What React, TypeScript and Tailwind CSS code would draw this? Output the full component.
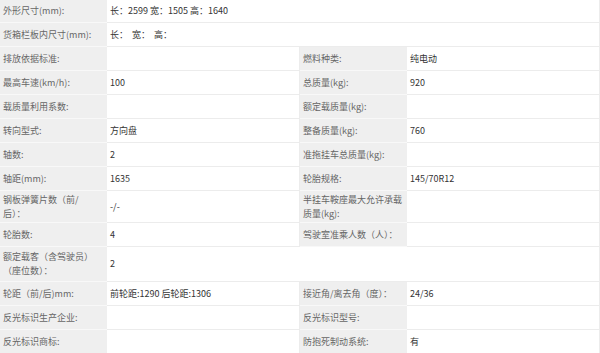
type Cell = { label: string; value: string };
type Row = { h: string; cells: Cell[]; wide?: boolean };

const rows: Row[] = [
  { h: 'h-[23px]', wide: true, cells: [{ label: '外形尺寸(mm):', value: '长：2599 宽：1505 高：1640' }] },
  { h: 'h-[24px]', wide: true, cells: [{ label: '货箱栏板内尺寸(mm):', value: '长：  宽：  高：' }] },
  {
    h: 'h-[24px]',
    cells: [
      { label: '排放依据标准:', value: '' },
      { label: '燃料种类:', value: '纯电动' },
    ],
  },
  {
    h: 'h-[24px]',
    cells: [
      { label: '最高车速(km/h):', value: '100' },
      { label: '总质量(kg):', value: '920' },
    ],
  },
  {
    h: 'h-[24px]',
    cells: [
      { label: '载质量利用系数:', value: '' },
      { label: '额定载质量(kg):', value: '' },
    ],
  },
  {
    h: 'h-[24px]',
    cells: [
      { label: '转向型式:', value: '方向盘' },
      { label: '整备质量(kg):', value: '760' },
    ],
  },
  {
    h: 'h-[24px]',
    cells: [
      { label: '轴数:', value: '2' },
      { label: '准拖挂车总质量(kg):', value: '' },
    ],
  },
  {
    h: 'h-[24px]',
    cells: [
      { label: '轴距(mm):', value: '1635' },
      { label: '轮胎规格:', value: '145/70R12' },
    ],
  },
  {
    h: 'h-[32px]',
    cells: [
      // the label wraps after the slash in the original
      { label: '钢板弹簧片数（前/\n后）：', value: '-/-' },
      { label: '半挂车鞍座最大允许承载质量(kg):', value: '' },
    ],
  },
  {
    h: 'h-[24px]',
    cells: [
      { label: '轮胎数:', value: '4' },
      { label: '驾驶室准乘人数（人）：', value: '' },
    ],
  },
  { h: 'h-[35px]', wide: true, cells: [{ label: '额定载客（含驾驶员）（座位数）：', value: '2' }] },
  {
    h: 'h-[24px]',
    cells: [
      { label: '轮距（前/后)mm:', value: '前轮距:1290 后轮距:1306' },
      { label: '接近角/离去角（度）：', value: '24/36' },
    ],
  },
  {
    h: 'h-[24px]',
    cells: [
      { label: '反光标识生产企业:', value: '' },
      { label: '反光标识型号:', value: '' },
    ],
  },
  {
    h: 'h-[24px]',
    cells: [
      { label: '反光标识商标:', value: '' },
      { label: '防抱死制动系统:', value: '有' },
    ],
  },
];

export default function App() {
  return (
    <div
      className="w-[600px] h-[353px] overflow-hidden bg-white text-[9px] leading-[14px]"
      style={{ fontFamily: '"Noto Sans CJK SC", "Noto Sans", sans-serif' }}
    >
      <div className="grid grid-cols-[107px_193px_107px_193px]">
        {rows.map((row, i) =>
          row.cells.map((cell, j) => (
            <div key={`${i}-${j}`} className="contents">
              <div
                className={`${row.h} flex items-center bg-[#efefef] border-b border-[#f8f8f8] pl-[3px] pr-[4px] text-[#666]`}
              >
                <span className="whitespace-pre-line">{cell.label}</span>
              </div>
              <div
                className={`${row.h} ${row.wide ? 'col-span-3' : ''} flex items-center bg-white border-b border-r border-[#ececec] pl-[3px] text-[#333]`}
              >
                <span className="whitespace-pre">{cell.value}</span>
              </div>
            </div>
          )),
        )}
      </div>
    </div>
  );
}
